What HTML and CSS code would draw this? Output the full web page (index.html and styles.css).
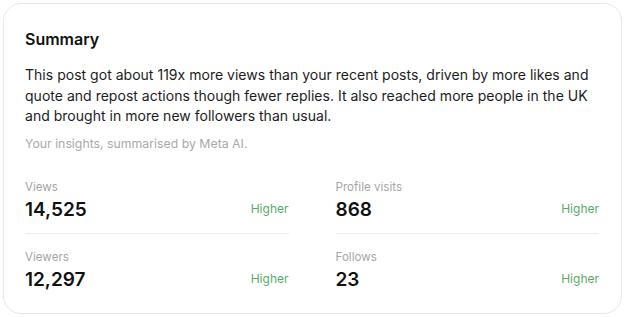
FILE: index.html
```html
<!DOCTYPE html>
<html lang="en">
<head>
<meta charset="utf-8">
<title>Summary</title>
<link rel="stylesheet" href="styles.css">
</head>
<body>
<section class="card">
  <h2 class="title">Summary</h2>
  <p class="body">This post got about 119x more views than your recent posts, driven by more likes and quote and repost actions though fewer replies. It also reached more people in the UK and brought in more new followers than usual.</p>
  <p class="note">Your insights, summarised by Meta AI.</p>
  <div class="stats">
    <div class="stat divided">
      <div class="label">Views</div>
      <div class="row"><span class="value">14,525</span><span class="trend">Higher</span></div>
    </div>
    <div class="stat divided">
      <div class="label">Profile visits</div>
      <div class="row"><span class="value">868</span><span class="trend">Higher</span></div>
    </div>
    <div class="stat">
      <div class="label">Viewers</div>
      <div class="row"><span class="value">12,297</span><span class="trend">Higher</span></div>
    </div>
    <div class="stat">
      <div class="label">Follows</div>
      <div class="row"><span class="value">23</span><span class="trend">Higher</span></div>
    </div>
  </div>
</section>
</body>
</html>
```
FILE: styles.css
```css
* { box-sizing: border-box; }
html, body { margin: 0; padding: 0; background: #ffffff; }
body {
  padding: 3px 4px 4px 3px;
  font-family: Inter, "Helvetica Neue", Arial, sans-serif;
  color: #1a1a1a;
}
.card {
  border: 1px solid #e8e8e8;
  border-radius: 18px;
  padding: 25px 22px 22px 21px;
  height: 311px;
}
.title {
  margin: 0;
  font-size: 16px;
  line-height: 20px;
  font-weight: 600;
  color: #111;
}
.body {
  margin: 16px 0 0;
  font-size: 14px;
  line-height: 20.5px;
  color: #1c1c1c;
  letter-spacing: 0.02px;
}
.note {
  margin: 9px 0 0;
  font-size: 12.3px;
  line-height: 16px;
  color: #a9a9a9;
}
.stats {
  margin-top: 27px;
  display: grid;
  grid-template-columns: 1fr 1fr;
  column-gap: 47px;
}
.stat.divided {
  border-bottom: 1px solid #ececec;
  padding-bottom: 12px;
  margin-bottom: 15px;
}
.label {
  font-size: 11.6px;
  line-height: 16px;
  color: #a6a6a6;
}
.row {
  margin-top: 4px;
  display: flex;
  justify-content: space-between;
  align-items: center;
}
.value {
  font-size: 19px;
  line-height: 22px;
  font-weight: 600;
  color: #111;
}
.trend {
  font-size: 12px;
  line-height: 16px;
  padding-bottom: 2px;
  color: #5aaa68;
}
```
